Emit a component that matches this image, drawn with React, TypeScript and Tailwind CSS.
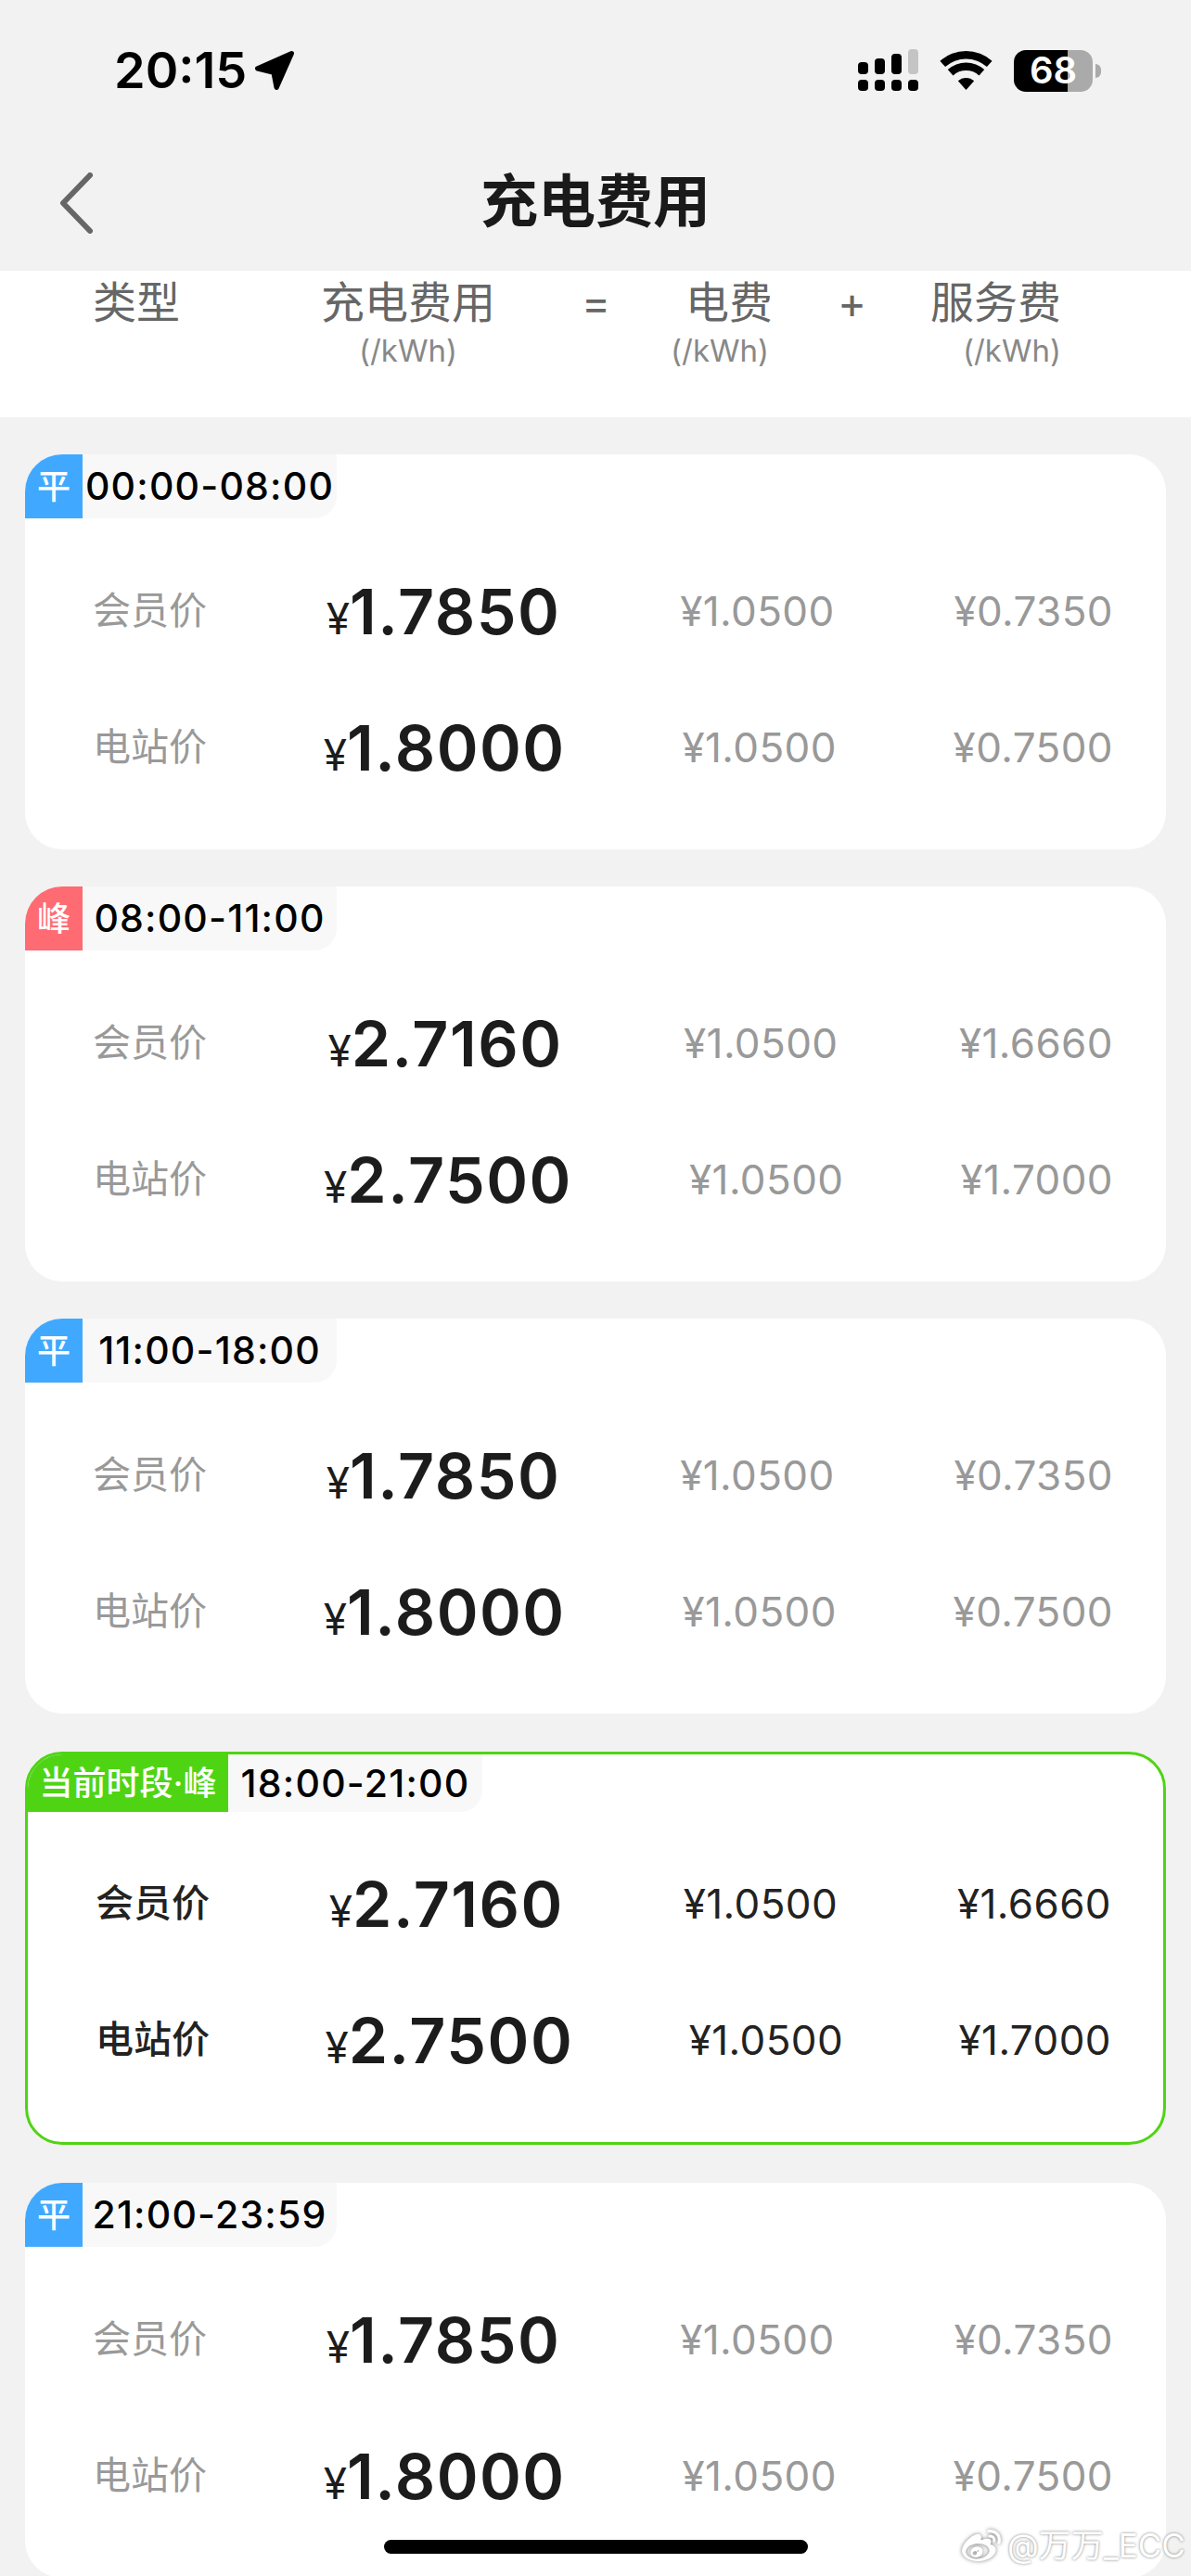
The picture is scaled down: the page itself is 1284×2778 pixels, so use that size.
import React from "react";
import { SiSinaweibo } from "react-icons/si";

const font = "font-['Inter','Noto_Sans_CJK_SC',sans-serif]";

type Row = { label: string; price: string; fee: string; service: string };
type CardData = { tag: string; tagClass: string; time: string; rows: Row[]; current?: boolean };

const flat: Row[] = [
  { label: "会员价", price: "1.7850", fee: "¥1.0500", service: "¥0.7350" },
  { label: "电站价", price: "1.8000", fee: "¥1.0500", service: "¥0.7500" },
];
const peak: Row[] = [
  { label: "会员价", price: "2.7160", fee: "¥1.0500", service: "¥1.6660" },
  { label: "电站价", price: "2.7500", fee: "¥1.0500", service: "¥1.7000" },
];

const cards: CardData[] = [
  { tag: "平", tagClass: "bg-[#40a9ff]", time: "00:00-08:00", rows: flat },
  { tag: "峰", tagClass: "bg-[#ff6b72]", time: "08:00-11:00", rows: peak },
  { tag: "平", tagClass: "bg-[#40a9ff]", time: "11:00-18:00", rows: flat },
  { tag: "当前时段·峰", tagClass: "bg-[#4fd414]", time: "18:00-21:00", rows: peak, current: true },
  { tag: "平", tagClass: "bg-[#40a9ff]", time: "21:00-23:59", rows: flat },
];

function Signal() {
  const bars: [number, number][] = [[0, 27], [18, 23], [36, 18], [54, 13]];
  return (
    <svg width="65" height="46" viewBox="0 0 65 46">
      {bars.map(([x, y], i) => (
        <rect key={x} x={x} y={y - 13} width="11" height={40 - y} rx="4" fill={i === 3 ? "#c4c4c4" : "#000"} />
      ))}
      {bars.map(([x]) => (
        <rect key={x} x={x} y="33" width="11" height="12" rx="4" fill="#000" />
      ))}
    </svg>
  );
}

function Wifi() {
  return (
    <svg width="57" height="42" viewBox="0 0 57 42" fill="#000">
      <path d="M0.4 10.8A42 42 0 0 1 56.6 10.8L50.9 17.1A33.5 33.5 0 0 0 6.1 17.1Z" />
      <path d="M8.8 20.1A29.5 29.5 0 0 1 48.2 20.1L42.55 26.4A21 21 0 0 0 14.45 26.4Z" />
      <path d="M28.5 42L19.8 32.3A13 13 0 0 1 37.2 32.3Z" />
    </svg>
  );
}

function Battery() {
  return (
    <div className="flex items-center">
      <div className="flex items-center justify-center w-[85px] h-[45px] rounded-[13px] bg-[linear-gradient(90deg,#000_58px,#aaaaaa_58px)] text-white text-[40px] font-semibold leading-none">
        68
      </div>
      <div className="w-[6px] h-[15px] ml-[3px] rounded-r-full bg-[#aaaaaa]" />
    </div>
  );
}

function StatusBar() {
  return (
    <div className="flex items-center justify-between h-[46px] mt-[53px] pl-[123px] pr-[97px]">
      <div className="flex items-center">
        <span className="text-[54px] font-semibold leading-none text-black">20:15</span>
        <svg className="ml-[8px]" width="44" height="44" viewBox="0 0 42 42">
          <path d="M38.5 3.5L3.5 19L20 23L23 38.5Z" fill="#000" stroke="#000" strokeWidth="5" strokeLinejoin="round" />
        </svg>
      </div>
      <div className="flex items-center">
        <Signal />
        <div className="ml-[23px]"><Wifi /></div>
        <div className="ml-[23px]"><Battery /></div>
      </div>
    </div>
  );
}

function Nav() {
  return (
    <div className="relative flex items-center justify-center h-[100px] mt-[69px]">
      <svg className="absolute left-[63px] top-[18px]" width="38" height="66" viewBox="0 0 38 66" fill="none">
        <path d="M34 3L5 33L34 63" stroke="#666" strokeWidth="6" strokeLinecap="round" strokeLinejoin="round" />
      </svg>
      <span className="text-[62px] font-semibold leading-none text-[#1a1a1a]">充电费用</span>
    </div>
  );
}

const unit = "text-[#888] text-[33px] leading-[38px] tracking-normal mt-[6px] whitespace-nowrap";

function TableHead() {
  return (
    <div className="flex items-start h-[158px] bg-white pl-[100px] text-[#666] text-[47px] leading-[54px]">
      <span className="mt-[7px] w-[94px] whitespace-nowrap">类型</span>
      <div className="mt-[7px] ml-[152px] w-[188px] flex flex-col items-center">
        <span className="whitespace-nowrap">充电费用</span>
        <span className={unit}>(/kWh)</span>
      </div>
      <span className="mt-[7px] ml-[93px] w-[30px] text-center">=</span>
      <div className="mt-[7px] ml-[66px] w-[106px] flex flex-col">
        <span className="text-right whitespace-nowrap relative left-[4px]">电费</span>
        <span className={unit}>(/kWh)</span>
      </div>
      <span className="mt-[7px] ml-[74px] w-[30px] text-center">+</span>
      <div className="mt-[7px] ml-[70px] w-[141px] flex flex-col items-end">
        <span className="whitespace-nowrap">服务费</span>
        <span className={unit}>(/kWh)</span>
      </div>
    </div>
  );
}

function PriceRow({ row, current }: { row: Row; current?: boolean }) {
  const muted = current ? "text-[#222]" : "text-[#999]";
  return (
    <div className="flex items-center justify-between h-[147px]">
      <span className={`text-[41px] leading-none ${current ? "text-[#222] font-medium" : "text-[#999]"}`}>{row.label}</span>
      <span className="flex items-baseline text-[#1c1c1c]">
        <span className="text-[46px] leading-none">¥</span>
        <span className="text-[68px] leading-none font-semibold tracking-[1.5px]">{row.price}</span>
      </span>
      <span className={`text-[44px] leading-none tracking-[0.4px] ${muted}`}>{row.fee}</span>
      <span className={`text-[44px] leading-none tracking-[0.4px] ${muted}`}>{row.service}</span>
    </div>
  );
}

function Card({ data }: { data: CardData }) {
  const c = data.current;
  return (
    <div
      className={`bg-white rounded-[40px] overflow-hidden ${
        c ? "h-[424px] my-[1px] border-[3px] border-[#4fd414]" : "h-[426px]"
      }`}
    >
      <div className="flex items-stretch">
        <div
          className={`flex items-center justify-center text-white font-medium ${data.tagClass} ${
            c ? "h-[62px] w-[216px] text-[36px]" : "h-[69px] w-[62px] text-[36px]"
          }`}
        >
          {data.tag}
        </div>
        <div className="flex items-center justify-center w-[274px] bg-[#f8f8f8] rounded-br-[24px] text-black font-medium text-[41px] leading-none tracking-[1.2px]">
          {data.time}
        </div>
      </div>
      <div className={c ? "pt-[25px] pl-[73px] pr-[56px]" : "pt-[26px] pl-[73px] pr-[57px]"}>
        {data.rows.map((r) => (
          <PriceRow key={r.label} row={r} current={c} />
        ))}
      </div>
    </div>
  );
}

export default function App() {
  return (
    <div className={`relative w-[1284px] h-[2778px] overflow-hidden bg-[#f2f2f2] ${font}`}>
      <div className="h-[292px] overflow-hidden">
        <StatusBar />
        <Nav />
      </div>
      <TableHead />
      <div className="flex flex-col gap-[40px] pt-[40px] px-[27px]">
        {cards.map((d) => (
          <Card key={d.time} data={d} />
        ))}
      </div>
      <div className="absolute left-[414px] top-[2739px] w-[457px] h-[15px] rounded-[8px] bg-black" />
      <div className="absolute left-[1033px] top-[2724px] flex items-center gap-[3px] text-white text-[35px] leading-none [text-shadow:0_0_3px_#777] whitespace-nowrap">
        <SiSinaweibo className="w-[50px] h-[42px] drop-shadow-[0_0_2px_#777]" />
        <span>@万万_ECC</span>
      </div>
    </div>
  );
}
